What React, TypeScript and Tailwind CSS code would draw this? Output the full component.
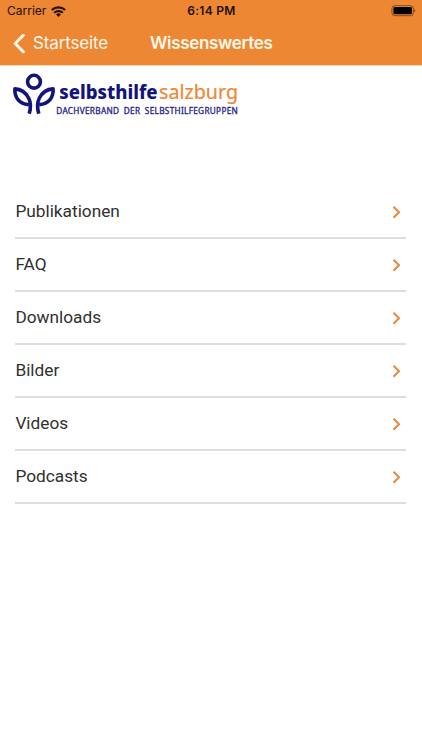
import React from 'react';

const menuItems = [
  { id: '1', title: 'Publikationen' },
  { id: '2', title: 'FAQ' },
  { id: '3', title: 'Downloads' },
  { id: '4', title: 'Bilder' },
  { id: '5', title: 'Videos' },
  { id: '6', title: 'Podcasts' },
];

const StatusBar: React.FC = () => (
  <div className="grid h-[22px] grid-cols-3 items-center pl-[7px] pr-[6px] font-['Inter',sans-serif] text-[#241004]">
    <div className="flex items-center gap-[5px]">
      <span className="text-[12px] leading-none">Carrier</span>
      <svg className="h-[11px] w-[15px]" viewBox="0 0 15 11" fill="none" stroke="currentColor" strokeWidth="2.2">
        <path d="M0.8 4a9.6 9.6 0 0 1 13.4 0" />
        <path d="M3.2 6.8a6.1 6.1 0 0 1 8.6 0" />
        <path d="M7.5 10.9 5.1 8.5a3.4 3.4 0 0 1 4.8 0z" fill="currentColor" stroke="none" />
      </svg>
    </div>
    <span className="text-center text-[12px] leading-none font-semibold tracking-[0.3px] whitespace-nowrap">6:14 PM</span>
    <svg className="h-[12px] w-[25px] justify-self-end" viewBox="0 0 25 12">
      <rect x="0.9" y="0.7" width="21.5" height="10" rx="3" fill="none" stroke="#000" strokeOpacity="0.45" />
      <rect x="2.4" y="2.1" width="18.5" height="7.2" rx="1.4" fill="#000" />
      <path d="M23.4 4v3.4c1.2-.6 1.2-2.8 0-3.4z" fill="#000" fillOpacity="0.55" />
    </svg>
  </div>
);

const NavBar: React.FC = () => (
  <div className="grid h-[43px] grid-cols-[150px_122px_150px] items-center font-['Inter',sans-serif] text-[#fff8ea]">
    <div className="flex items-center gap-[8px] pl-[13px]">
      <svg className="h-[20px] w-[12px]" viewBox="0 0 12 20" fill="none" stroke="currentColor" strokeWidth="3" strokeLinecap="round" strokeLinejoin="round">
        <path d="M10.3 1.3 2.2 9.5l8.1 8.2" />
      </svg>
      <span className="text-[17px] leading-none tracking-[-0.15px]">Startseite</span>
    </div>
    <h1 className="text-[17px] leading-none font-semibold tracking-[-0.32px] whitespace-nowrap">Wissenswertes</h1>
  </div>
);

const Logo: React.FC = () => (
  <svg className="h-[46px] w-[230px]" viewBox="0 0 230 46" role="img" aria-label="selbsthilfe salzburg">
    <g fill="none" stroke="#13137c" strokeWidth="3.6" strokeLinejoin="round">
      <circle cx="22" cy="9.7" r="6.4" />
      <path d="M17.2 41.8c1.600-5.500 1.800-11.300-.6-15.800C13.900 20.900 9.200 17.300 2.900 16.900c-.5 8.300 4.200 15.200 13.600 15.700" />
      <path d="M26.800 41.8c-1.600-5.500-1.800-11.300 .6-15.800 2.700-5.100 7.400-8.700 13.700-9.100 .5 8.300-4.200 15.200-13.600 15.700" />
    </g>
    <text x="47.300" y="26.600" textLength="98.300" lengthAdjust="spacingAndGlyphs" fontFamily="Noto Sans, sans-serif" fontWeight="800" fontSize="20" fill="#13137c">selbsthilfe</text>
    <text x="147" y="26.600" textLength="79" lengthAdjust="spacingAndGlyphs" fontFamily="Noto Sans, sans-serif" fontSize="20" fill="#ee8733" stroke="#ee8733" strokeWidth="0.2">salzburg</text>
    <text x="44.300" y="41.600" textLength="181.500" fontFamily="Noto Sans, sans-serif" fontSize="8.200" wordSpacing="2" fill="#2b2b88" stroke="#2b2b88" strokeWidth="0.35">DACHVERBAND DER SELBSTHILFEGRUPPEN</text>
  </svg>
);

const App: React.FC = () => {
  return (
    <div className="flex h-[750px] w-[422px] flex-col overflow-hidden bg-white">
      <header className="border-b border-[#fbd9b5] bg-[#ee8733]">
        <StatusBar />
        <NavBar />
      </header>
      <div className="h-[120px] pt-[6px] pl-3">
        <Logo />
      </div>
      <ul className="pr-4 pl-[15.4px]">
        {menuItems.map((item) => (
          <li key={item.id} className="flex h-[53px] items-center justify-between border-b-2 border-[#dedede] pr-[5px]">
            <span className="pt-px font-['Roboto',sans-serif] text-[17.25px] leading-none text-[#303030]">{item.title}</span>
            <svg className="h-[14px] w-[9px]" viewBox="0 0 9 14" fill="none" stroke="#e9873a" strokeWidth="2">
              <path d="M1.5 1.7 7 7.2l-5.500 5.500" />
            </svg>
          </li>
        ))}
      </ul>
    </div>
  );
};

export default App;
